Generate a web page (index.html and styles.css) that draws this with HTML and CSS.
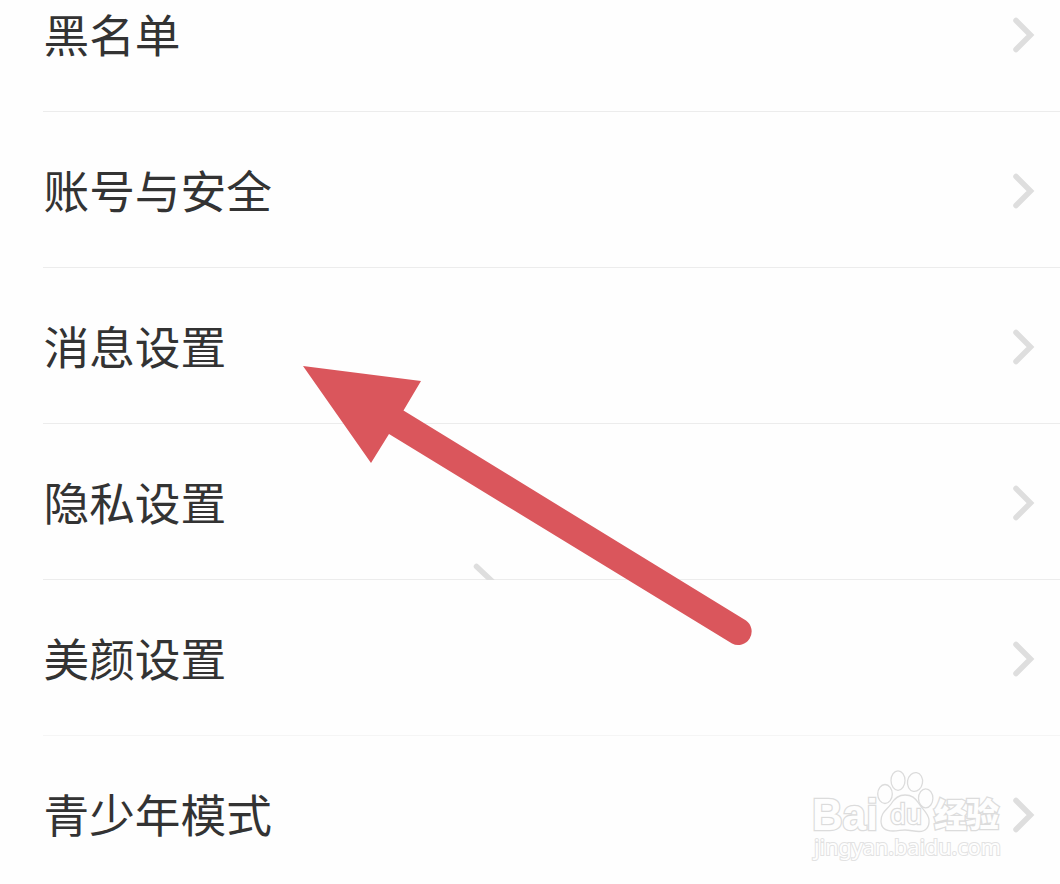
FILE: index.html
```html
<!DOCTYPE html>
<html lang="zh-CN">
<head>
  <meta charset="UTF-8">
  <meta name="viewport" content="width=device-width, initial-scale=1.0">
  <title>设置</title>
  <link rel="stylesheet" href="styles.css">
</head>
<body>
  <svg class="symbols">
    <symbol id="chevron" viewBox="0 0 24 36">
      <path d="M5 3.5 L19.5 18 L5 32.5" fill="none" stroke="#dedede" stroke-width="5.500" stroke-linecap="round" stroke-linejoin="miter"/>
    </symbol>
  </svg>

  <ul class="settings">
    <li class="row"><span class="label">黑名单</span><svg class="chevron"><use href="#chevron"/></svg></li>
    <li class="row"><span class="label">账号与安全</span><svg class="chevron"><use href="#chevron"/></svg></li>
    <li class="row"><span class="label">消息设置</span><svg class="chevron"><use href="#chevron"/></svg></li>
    <li class="row"><span class="label">隐私设置</span><svg class="chevron"><use href="#chevron"/></svg></li>
    <li class="row light"><span class="label">美颜设置</span><svg class="chevron"><use href="#chevron"/></svg></li>
    <li class="row"><span class="label">青少年模式</span><svg class="chevron"><use href="#chevron"/></svg></li>
  </ul>

  <!-- pointer to the message settings row -->
  <svg class="arrow" viewBox="0 0 1060 884">
    <clipPath id="above-line"><rect x="460" y="550" width="50" height="30"/></clipPath>
    <path d="M476.500 566.500 L494 583" class="stub" clip-path="url(#above-line)"/>
    <path d="M303 366 L421 381 L403.500 410.500 L746 620.500 A13.500 13.500 0 0 1 732 643.500 L389 434 L371 463 Z" fill="#da565c"/>
  </svg>

  <svg class="watermark" viewBox="0 0 220 100">
    <g class="paw">
      <ellipse cx="82" cy="30" rx="7.300" ry="9.500"/>
      <ellipse cx="95" cy="16.600" rx="7" ry="9.700"/>
      <ellipse cx="112" cy="18" rx="7.500" ry="9.500" transform="rotate(10 112 18)"/>
      <ellipse cx="122.700" cy="34.300" rx="7.200" ry="9.500"/>
      <path d="M102 31 C95 31 91 35 88 40 C84 46 78 48 78 57 C78 64 83 67 90 67 C95 67 98 66 102 66 C107 66 111 67.500 116 67.500 C123 67.500 126.500 63 126 56 C125.500 49 119 45 115.500 39 C112 34 109 31 102 31 Z"/>
    </g>
    <text class="brand" x="9" y="65.500" textLength="66" lengthAdjust="spacingAndGlyphs">Bai</text>
    <text class="du" x="87" y="60" textLength="32" lengthAdjust="spacingAndGlyphs">du</text>
    <text class="cjk" x="131" y="63" textLength="65">经验</text>
    <text class="url" x="11" y="90.500" textLength="187" lengthAdjust="spacingAndGlyphs">jingyan.baidu.com</text>
  </svg>
</body>
</html>
```
FILE: styles.css
```css
body {
  margin: 0;
  height: 884px;
  overflow: hidden;
  background: #fefefe;
  color: #333;
  font-family: "Noto Sans CJK SC", sans-serif;
}
.symbols {
  display: block;
  width: 0;
  height: 0;
}
.settings {
  list-style: none;
  margin: -44px 0 0;
  padding: 0 0 0 43px;
}
.row {
  display: flex;
  align-items: center;
  justify-content: space-between;
  box-sizing: border-box;
  height: 156px;
  padding: 3px 25px 0 0;
  border-bottom: 1px solid #ececec;
}
.row.light { border-color: #f5f5f5; }
.row:last-child { border-bottom-color: transparent; }
.label {
  margin: 0 0 5px 0.5px;
  font-size: 45.7px;
  line-height: 66px;
}
.chevron {
  width: 24px;
  height: 36px;
}
.arrow {
  position: absolute;
  top: 0;
  left: 0;
  width: 1060px;
  height: 884px;
}
.stub {
  fill: none;
  stroke: #dedede;
  stroke-width: 5.5;
  stroke-linecap: round;
}
.watermark {
  position: absolute;
  top: 764px;
  left: 803px;
  width: 220px;
  height: 100px;
}
.watermark text,
.paw {
  fill: #fefefe;
  stroke: #dcdcdc;
  stroke-width: 1.3;
}
.watermark text {
  paint-order: stroke;
  stroke-width: 2.6;
}
.watermark .brand {
  font: bold 44px "Liberation Sans", sans-serif;
}
.watermark .du {
  font: 27px "Noto Sans", sans-serif;
}
.watermark .cjk {
  font: 900 33px "Noto Sans CJK SC", sans-serif;
}
.watermark .url {
  font: 22px "Noto Sans", sans-serif;
  stroke: #e2e2e2;
  stroke-width: 2;
}
```
